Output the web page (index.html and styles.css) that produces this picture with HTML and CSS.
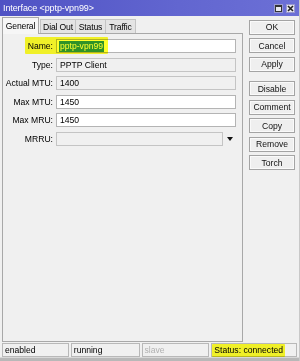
FILE: index.html
```html
<!DOCTYPE html>
<html>
<head>
<meta charset="utf-8">
<link rel="stylesheet" href="styles.css">
</head>
<body>
<div class="window">
  <div class="titlebar">
    <span class="title">Interface &lt;pptp-vpn99&gt;</span>
    <div class="controls">
      <span class="ctl ctl-max"><svg width="7" height="7" viewBox="0 0 7 7"><rect x="0.5" y="0.5" width="6" height="6" fill="none" stroke="#333" stroke-width="1"/><line x1="0" y1="1.5" x2="7" y2="1.5" stroke="#333" stroke-width="1"/></svg></span>
      <span class="ctl ctl-close"><svg width="7" height="7" viewBox="0 0 7 7"><path d="M1 1 L6 6 M6 1 L1 6" stroke="#222" stroke-width="1.6"/></svg></span>
    </div>
  </div>
  <div class="main">
    <div class="left">
      <div class="tabs">
        <div class="tab active">General</div>
        <div class="tab">Dial Out</div>
        <div class="tab">Status</div>
        <div class="tab">Traffic</div>
      </div>
      <div class="panel">
        <div class="row">
          <label class="lbl">Name:</label>
          <div class="field white"><span class="sel">pptp-vpn99</span></div>
          <div class="marker marker-name"></div>
        </div>
        <div class="row">
          <label class="lbl">Type:</label>
          <div class="field gray">PPTP Client</div>
        </div>
        <div class="row">
          <label class="lbl">Actual MTU:</label>
          <div class="field gray">1400</div>
        </div>
        <div class="row">
          <label class="lbl">Max MTU:</label>
          <div class="field white">1450</div>
        </div>
        <div class="row">
          <label class="lbl">Max MRU:</label>
          <div class="field white">1450</div>
        </div>
        <div class="row">
          <label class="lbl">MRRU:</label>
          <div class="field gray short"></div>
          <span class="arrow"></span>
        </div>
      </div>
    </div>
    <div class="buttons">
      <div class="btn">OK</div>
      <div class="btn">Cancel</div>
      <div class="btn">Apply</div>
      <div class="btn sep">Disable</div>
      <div class="btn">Comment</div>
      <div class="btn">Copy</div>
      <div class="btn">Remove</div>
      <div class="btn">Torch</div>
    </div>
  </div>
  <div class="statusbar">
    <div class="cell c1">enabled</div>
    <div class="cell c2">running</div>
    <div class="cell c3 dim">slave</div>
    <div class="cell c4">Status: connected<div class="marker marker-status"></div></div>
  </div>
  <div class="bottomedge"></div>
</div>
</body>
</html>
```
FILE: styles.css
```css
html, body {
  margin: 0;
  padding: 0;
  background: #f0f0f0;
}
body {
  width: 300px;
  height: 361px;
  overflow: hidden;
  font-family: "Liberation Sans", Arial, sans-serif;
  font-size: 8.6px;
  color: #000;
}
.window {
  width: 300px;
  height: 361px;
  display: flex;
  flex-direction: column;
  background: #f0f0f0;
  box-sizing: border-box;
  border-right: 1px solid #c8c8c8;
}
.titlebar {
  height: 16px;
  flex: none;
  background: linear-gradient(to right, #4f52c4, #6266d0 60%, #6c70d6);
  display: flex;
  align-items: center;
  justify-content: space-between;
  padding: 0 4px 0 3px;
}
.title {
  color: #fff;
  font-size: 9px;
  letter-spacing: -0.1px;
}
.controls {
  display: flex;
  gap: 3px;
}
.ctl {
  width: 9px;
  height: 9px;
  background: #e8e8f0;
  border: 1px solid #9a9ad0;
  box-sizing: border-box;
  display: flex;
  align-items: center;
  justify-content: center;
}
.ctl svg { display: block; }
.main {
  flex: 1;
  display: flex;
  min-height: 0;
}
.left {
  width: 241px;
  margin-left: 2px;
  padding-top: 1px;
  display: flex;
  flex-direction: column;
}
.tabs {
  display: flex;
  align-items: flex-end;
  height: 16px;
  flex: none;
  position: relative;
  z-index: 1;
}
.tab {
  height: 14px;
  flex: none;
  box-sizing: border-box;
  padding: 0;
  border: 1px solid #c4c4c4;
  border-bottom: none;
  background: #e4e4e4;
  display: flex;
  align-items: center;
  justify-content: center;
  margin-left: -1px;
  white-space: nowrap;
  letter-spacing: -0.15px;
}
.tab.active {
  width: 37px;
  height: 17px;
  margin-left: 0;
  margin-bottom: -1px;
  background: #f6f6f6;
  border-color: #a8a8a8;
  margin-right: 2px;
}
.tab:nth-child(2) { width: 36px; }
.tab:nth-child(3) { width: 31px; }
.tab:nth-child(4) { width: 31px; }
.panel {
  flex: 1;
  border: 1px solid #a8a8a8;
  background: #f0f0f0;
  padding-top: 5px;
  display: flex;
  flex-direction: column;
  gap: 4.5px;
}
.row {
  display: flex;
  align-items: center;
  height: 14px;
  position: relative;
}
.lbl {
  width: 50px;
  text-align: right;
  margin-right: 3px;
  white-space: nowrap;
}
.field {
  width: 180px;
  height: 14px;
  box-sizing: border-box;
  border: 1px solid #b4b4b4;
  padding: 0 3px;
  display: flex;
  align-items: center;
  white-space: nowrap;
}
.field.white { background: #fff; }
.field.gray { background: #f0f0f0; border-color: #c4c4c4; }
.field.short { width: 167px; }
.sel {
  background: #2f92ee;
  color: #fff;
  padding: 0 1px;
  margin-left: -1px;
  line-height: 11px;
}
.arrow {
  width: 0;
  height: 0;
  margin-left: 4px;
  border-left: 3.5px solid transparent;
  border-right: 3.5px solid transparent;
  border-top: 4px solid #111;
}
.marker {
  position: absolute;
  background: #ffff2a;
  mix-blend-mode: multiply;
  border-radius: 1px;
}
.marker-name {
  left: 22px;
  top: -2px;
  width: 83px;
  height: 17px;
}
.buttons {
  width: 46px;
  margin-left: 6px;
  padding-top: 3.5px;
  display: flex;
  flex-direction: column;
  gap: 3.5px;
}
.btn {
  height: 15px;
  flex: none;
  box-sizing: border-box;
  border: 1px solid #a4a4a4;
  box-shadow: inset 0 0 0 1px #fafafa;
  background: #efefef;
  display: flex;
  align-items: center;
  justify-content: center;
  color: #111;
}
.btn.sep { margin-top: 6px; }
.statusbar {
  height: 15px;
  flex: none;
  display: flex;
  gap: 2px;
  padding: 1px 2px 0 2px;
  box-sizing: border-box;
}
.cell {
  height: 14px;
  box-sizing: border-box;
  border: 1px solid #b8b8b8;
  display: flex;
  align-items: center;
  padding: 0 2px;
  white-space: nowrap;
  position: relative;
}
.c1 { width: 67px; }
.c2 { width: 69px; }
.c3 { width: 68px; }
.c4 { width: 86px; }
.dim { color: #b0b0b0; }
.marker-status {
  left: 0;
  top: 0;
  width: 73px;
  height: 13px;
}
.bottomedge {
  height: 3px;
  flex: none;
  border-top: 1px solid #d8d8d8;
  background: #b8b8b8;
}
```
